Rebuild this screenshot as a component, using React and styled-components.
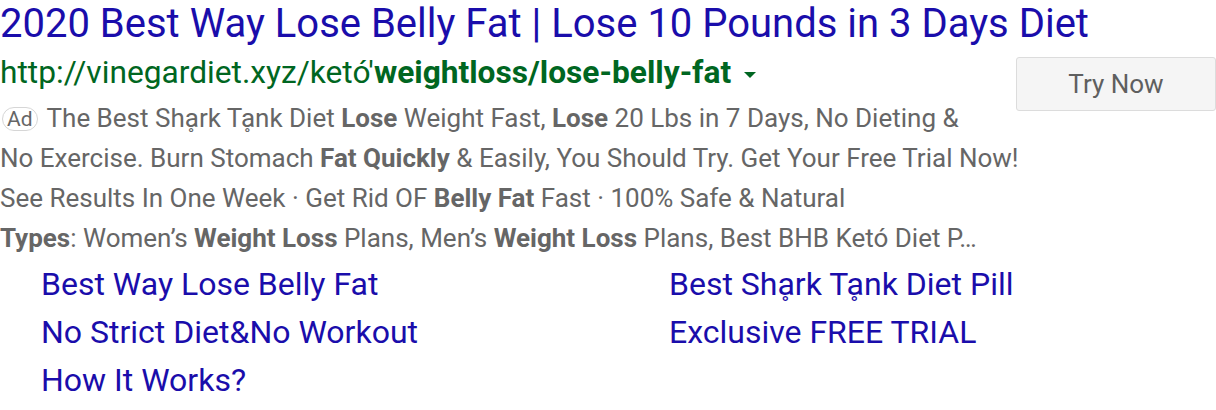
import React from "react";
import styled, { createGlobalStyle } from "styled-components";

const Global = createGlobalStyle`
  html, body { margin: 0; padding: 0; background: #fff; }
  body { font-family: Roboto, "Liberation Sans", Arial, sans-serif; }
`;

const Ad = styled.div`
  width: 1216px;
  height: 410px;
  overflow: hidden;
  background: #fff;
`;

const Title = styled.a`
  display: block;
  color: #1a0dab;
  font-size: 40px;
  line-height: 48px;
  white-space: nowrap;
  text-decoration: none;
`;

const Main = styled.div`
  display: flex;
  align-items: flex-start;
  justify-content: space-between;
`;

const Left = styled.div`
  display: flex;
  flex-direction: column;
  flex: 1;
  min-width: 0;
`;

const Url = styled.div`
  display: flex;
  align-items: center;
  color: #006621;
  font-size: 31.7px;
  line-height: 47px;
  height: 47px;
  padding-top: 1px;
  white-space: nowrap;
  b { font-weight: 700; }
`;

const Caret = styled.span`
  display: inline-block;
  width: 0;
  height: 0;
  margin-left: 13px;
  margin-top: 4px;
  border-left: 6.5px solid transparent;
  border-right: 6.5px solid transparent;
  border-top: 6px solid #006621;
`;

const Description = styled.div`
  padding-top: 2px;
`;

const Line = styled.div`
  color: #666;
  font-size: 26px;
  line-height: 40px;
  white-space: nowrap;
  b { font-weight: 700; color: #666; }
`;

const Badge = styled.span`
  display: inline-block;
  box-sizing: border-box;
  height: 24px;
  border: 1px solid #d6d6d6;
  border-radius: 12px;
  font-size: 21px;
  line-height: 22px;
  padding: 0 4px;
  margin: 0 9px 0 2px;
  color: #666;
  vertical-align: 1px;
`;

const Button = styled.button`
  flex-shrink: 0;
  box-sizing: border-box;
  width: 200px;
  height: 54px;
  margin-top: 9px;
  border: 1px solid #dcdcdc;
  border-radius: 3px;
  background: #f5f5f5;
  color: #5f5f5f;
  font-family: Roboto, "Liberation Sans", Arial, sans-serif;
  font-size: 26px;
  padding: 0;
`;

const Sitelinks = styled.div`
  display: grid;
  grid-template-columns: 628px auto;
  padding-left: 41px;
  margin-top: 2px;
`;

const Sitelink = styled.a`
  color: #1a0dab;
  font-size: 32px;
  line-height: 48px;
  text-decoration: none;
  white-space: nowrap;
`;

export default function App() {
  return (
    <Ad>
      <Global />
      <Title href="#">2020 Best Way Lose Belly Fat | Lose 10 Pounds in 3 Days Diet</Title>
      <Main>
        <Left>
          <Url>
            http://vinegardiet.xyz/ketó'<b>weightloss/lose-belly-fat</b>
            <Caret />
          </Url>
          <Description>
            <Line>
              <Badge>Ad</Badge>The Best Sha&#805;rk Ta&#805;nk Diet <b>Lose</b> Weight Fast, <b>Lose</b> 20 Lbs in 7 Days, No Dieting &amp;
            </Line>
            <Line>
              No Exercise. Burn Stomach <b>Fat Quickly</b> &amp; Easily, You Should Try. Get Your Free Trial Now!
            </Line>
            <Line>
              See Results In One Week · Get Rid OF <b>Belly Fat</b> Fast · 100% Safe &amp; Natural
            </Line>
            <Line>
              <b>Types</b>: Women’s <b>Weight Loss</b> Plans, Men’s <b>Weight Loss</b> Plans, Best BHB Ketó Diet P…
            </Line>
          </Description>
        </Left>
        <Button>Try Now</Button>
      </Main>
      <Sitelinks>
        <Sitelink href="#">Best Way Lose Belly Fat</Sitelink>
        <Sitelink href="#">Best Sha&#805;rk Ta&#805;nk Diet Pill</Sitelink>
        <Sitelink href="#">No Strict Diet&amp;No Workout</Sitelink>
        <Sitelink href="#">Exclusive FREE TRIAL</Sitelink>
        <Sitelink href="#">How It Works?</Sitelink>
      </Sitelinks>
    </Ad>
  );
}
